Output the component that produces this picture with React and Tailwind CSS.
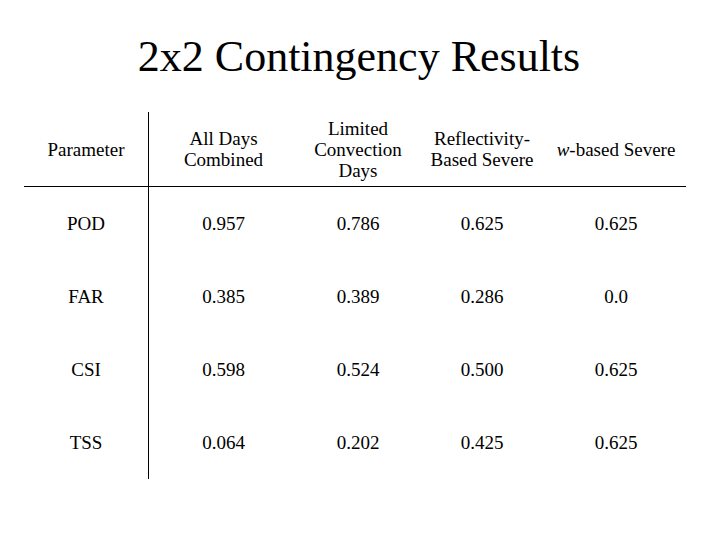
import React from "react";

const columns = [
  { key: "param", label: ["Parameter"] },
  { key: "all", label: ["All Days", "Combined"] },
  { key: "limited", label: ["Limited", "Convection", "Days"] },
  { key: "refl", label: ["Reflectivity-", "Based Severe"] },
  { key: "w", label: null },
];

const rows = [
  ["POD", "0.957", "0.786", "0.625", "0.625"],
  ["FAR", "0.385", "0.389", "0.286", "0.0"],
  ["CSI", "0.598", "0.524", "0.500", "0.625"],
  ["TSS", "0.064", "0.202", "0.425", "0.625"],
];

const gridCols = "grid grid-cols-[124px_150px_120px_128px_140px]";

export default function App() {
  return (
    <div className="w-[718px] h-[538px] bg-white text-black overflow-hidden font-['Liberation_Serif','Times_New_Roman',serif]">
      <h1 className="pt-[35px] text-center text-[44px] leading-[44px] font-normal">
        2x2 Contingency Results
      </h1>

      <div className="ml-[24px] mt-[33px] w-[662px] text-[19px] leading-[21px]">
        {/* Kepala tabel */}
        <div className={`${gridCols} h-[75px] border-b border-black`}>
          {columns.map((col, i) => (
            <div
              key={col.key}
              className={`flex flex-col items-center justify-center text-center ${
                i === 1 ? "border-l border-black" : ""
              }`}
            >
              {col.label ? (
                col.label.map((line) => <span key={line}>{line}</span>)
              ) : (
                <span>
                  <i>w</i>-based Severe
                </span>
              )}
            </div>
          ))}
        </div>

        {/* Isi tabel */}
        {rows.map((row) => (
          <div key={row[0]} className={`${gridCols} h-[73px]`}>
            {row.map((cell, i) => (
              <div
                key={i}
                className={`flex items-center justify-center ${
                  i === 1 ? "border-l border-black" : ""
                }`}
              >
                {cell}
              </div>
            ))}
          </div>
        ))}
      </div>
    </div>
  );
}
